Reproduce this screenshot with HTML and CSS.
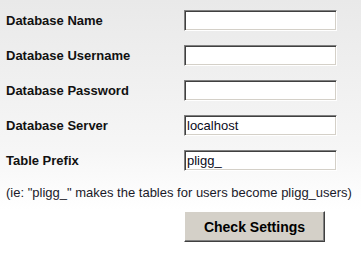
FILE: index.html
```html
<!DOCTYPE html>
<html lang="en">

<head>
    <meta charset="UTF-8">
    <title>Pligg Install - Database Settings</title>
    <link rel="stylesheet" href="styles.css">
</head>

<body>
    <form class="db-form">
        <div class="row">
            <label for="dbname">Database Name</label>
            <input type="text" id="dbname">
        </div>
        <div class="row">
            <label for="dbuser">Database Username</label>
            <input type="text" id="dbuser">
        </div>
        <div class="row">
            <label for="dbpass">Database Password</label>
            <input type="password" id="dbpass">
        </div>
        <div class="row">
            <label for="dbhost">Database Server</label>
            <input type="text" id="dbhost" value="localhost">
        </div>
        <div class="row">
            <label for="prefix">Table Prefix</label>
            <input type="text" id="prefix" value="pligg_">
        </div>
        <p class="hint">(ie: "pligg_" makes the tables for users become pligg_users)</p>
        <button type="submit" class="check-btn">Check Settings</button>
    </form>
</body>

</html>
```

FILE: styles.css
```css
* {
    margin: 0;
    padding: 0;
    box-sizing: border-box;
    font-family: 'Liberation Sans', Arial, sans-serif;
}

html,
body {
    height: 100%;
}

body {
    background: linear-gradient(#e9e9e9, #f6f6f6 150px, #ffffff 210px);
    color: #111;
}

.db-form {
    padding: 10px 0 0 6px;
}

.row {
    display: flex;
    align-items: center;
    height: 21px;
    margin-bottom: 14px;
}

.row label {
    width: 178px;
    font-size: 13px;
    font-weight: bold;
    color: #111;
}

.row input {
    width: 153px;
    height: 21px;
    padding: 0 2px;
    font-size: 13px;
    color: #0a0a20;
    background-color: #fff;
    border: 1px solid;
    border-color: #808080 #ffffff #ffffff #808080;
    box-shadow: inset 1px 1px 0 #404040, inset -1px -1px 0 #d4d0c8;
    outline: none;
}

.hint {
    margin-top: 1px;
    font-size: 13px;
    line-height: 15px;
    color: #1a1a2a;
}

.check-btn {
    margin: 11px 0 0 178px;
    width: 141px;
    height: 31px;
    font-size: 14px;
    font-weight: bold;
    color: #000;
    background-color: #d4d0c8;
    border: 1px solid;
    border-color: #ffffff #404040 #404040 #ffffff;
    box-shadow: inset -1px -1px 0 #808080;
    cursor: pointer;
}
```
